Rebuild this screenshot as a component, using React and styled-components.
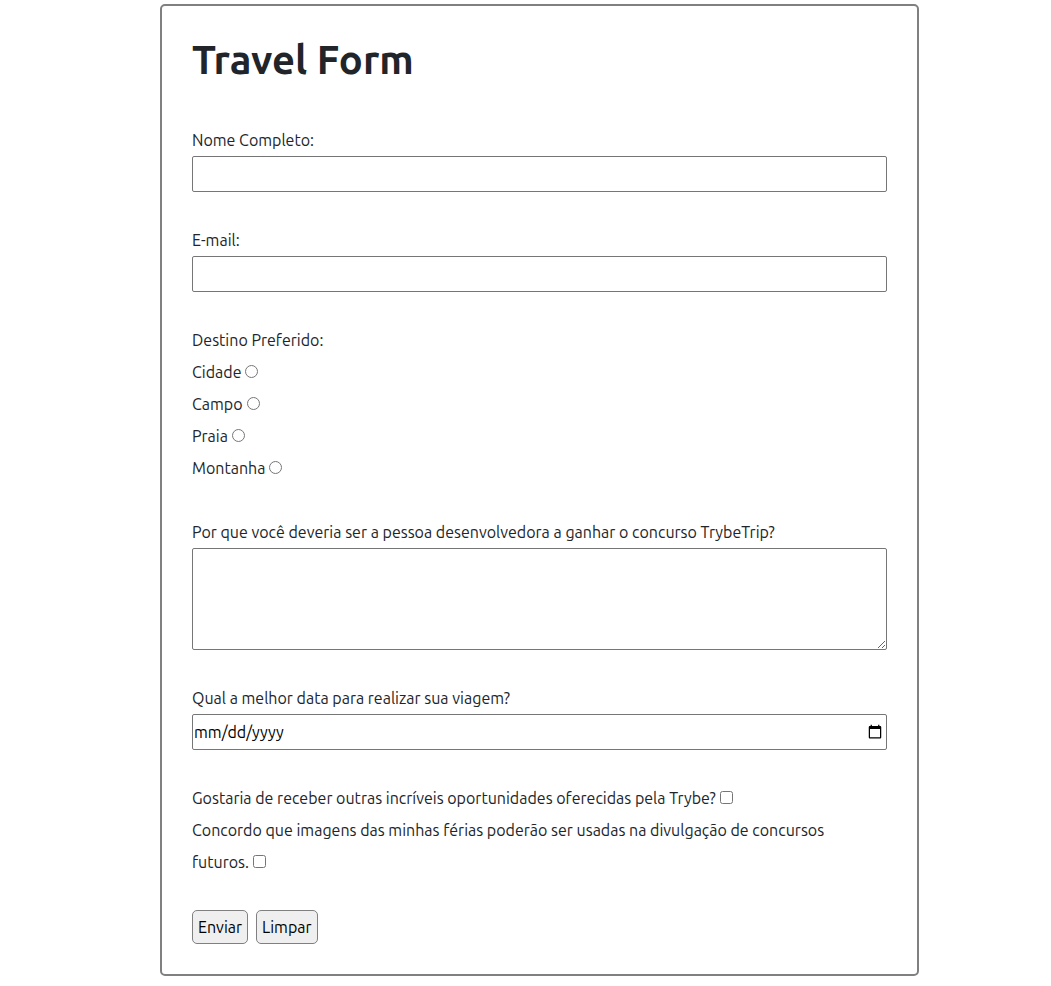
import React from "react";
import styled, { createGlobalStyle } from "styled-components";

const GlobalStyle = createGlobalStyle`
  *, *::before, *::after { box-sizing: border-box; }
  body {
    margin: 0;
    background: #fff;
    color: #212529;
    font-family: Ubuntu, "Noto Sans", sans-serif;
    font-size: 16px;
    font-weight: 400;
    line-height: 32px;
  }
`;

const Page = styled.main`
  padding: 4px 132px 8px 160px;
`;

const Form = styled.form`
  border: 2px solid #808080;
  border-radius: 5px;
  padding: 30px;
`;

const Title = styled.h1`
  margin: 0 0 40px;
  font-size: 40px;
  font-weight: 600;
  line-height: 48px;
`;

const Field = styled.div`
  display: flex;
  flex-direction: column;
  margin-bottom: 32px;
`;

const Group = styled.fieldset`
  border: 0;
  margin: 0 0 32px;
  padding: 0;
`;

const Consents = styled.div`
  margin-bottom: 32px;
  padding-right: 16px;
`;

const Legend = styled.legend`
  padding: 0;
`;

const Input = styled.input`
  width: 100%;
  height: 36px;
  padding: 1px;
  border: 1px solid #767676;
  border-radius: 2px;
  background: #fff;
  color: #000;
  font: inherit;

  &::-webkit-datetime-edit-month-field,
  &::-webkit-datetime-edit-day-field,
  &::-webkit-datetime-edit-year-field {
    padding: 0;
  }
`;

const TextArea = styled.textarea`
  width: 100%;
  height: 102px;
  padding: 2px;
  border: 1px solid #767676;
  border-radius: 2px;
  font: inherit;
  resize: vertical;
`;

const Choice = styled.label`
  display: block;
`;

const Mark = styled.input`
  width: 13px;
  height: 13px;
  margin: 0 0 0 4px;
`;

const Actions = styled.div`
  display: flex;
  gap: 8px;
`;

const Button = styled.button`
  height: 34px;
  padding: 0 5px;
  border: 1px solid #808080;
  border-radius: 5px;
  background: #efefef;
  color: #000;
  font: inherit;
`;

const destinations = ["Cidade", "Campo", "Praia", "Montanha"];

export default function App() {
  return (
    <Page>
      <GlobalStyle />
      <Form onSubmit={(e) => e.preventDefault()}>
        <Title>Travel Form</Title>
        <Field>
          <label htmlFor="name">Nome Completo:</label>
          <Input id="name" type="text" />
        </Field>
        <Field>
          <label htmlFor="email">E-mail:</label>
          <Input id="email" type="email" />
        </Field>
        <Group>
          <Legend>Destino Preferido:</Legend>
          {destinations.map((place) => (
            <Choice key={place}>
              {place}
              <Mark type="radio" name="destination" value={place} />
            </Choice>
          ))}
        </Group>
        <Field>
          <label htmlFor="reason">
            Por que você deveria ser a pessoa desenvolvedora a ganhar o concurso TrybeTrip?
          </label>
          <TextArea id="reason" />
        </Field>
        <Field>
          <label htmlFor="date">Qual a melhor data para realizar sua viagem?</label>
          <Input id="date" type="date" />
        </Field>
        <Consents>
          <Choice>
            Gostaria de receber outras incríveis oportunidades oferecidas pela Trybe?
            <Mark type="checkbox" />
          </Choice>
          <Choice>
            Concordo que imagens das minhas férias poderão ser usadas na divulgação de concursos futuros.
            <Mark type="checkbox" />
          </Choice>
        </Consents>
        <Actions>
          <Button type="submit">Enviar</Button>
          <Button type="reset">Limpar</Button>
        </Actions>
      </Form>
    </Page>
  );
}
